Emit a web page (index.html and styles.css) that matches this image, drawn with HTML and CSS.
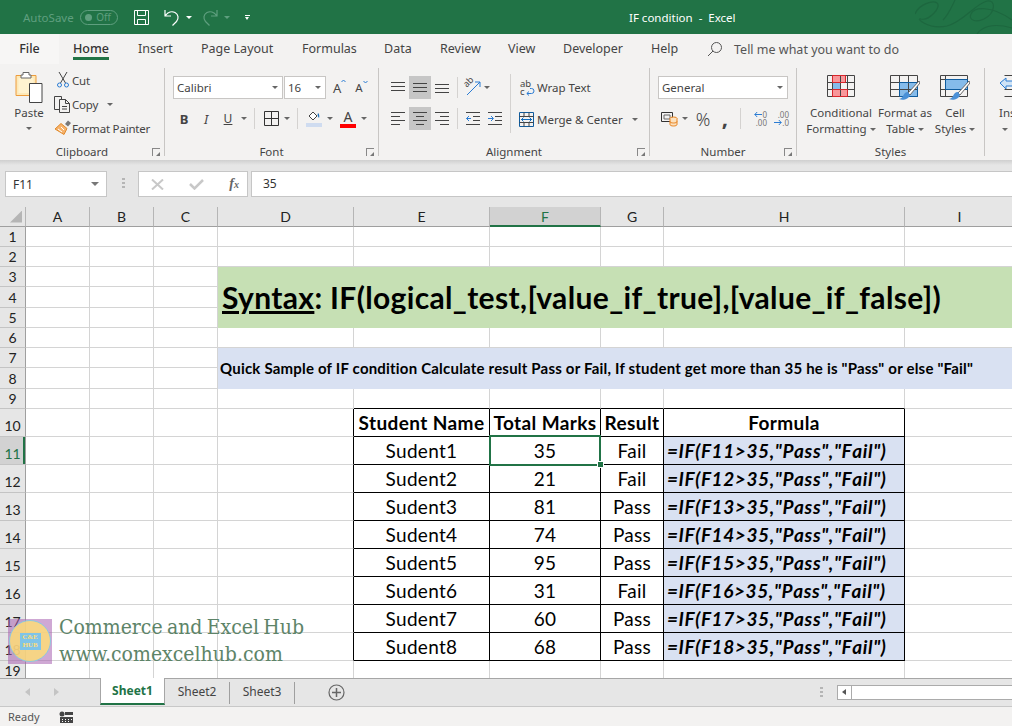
FILE: index.html
```html
<!DOCTYPE html>
<html>
<head>
    <meta charset="UTF-8">
    <title>IF condition - Excel</title>
    <link rel="stylesheet" href="styles.css">
</head>
<body>
    <!-- title bar -->
    <div class="titlebar">
        <span class="autosave">AutoSave</span>
        <span class="toggle"><i></i>Off</span>
        <svg class="qat-save" width="17" height="17" viewBox="0 0 17 17" fill="none" stroke="#fff"><path d="M1.5 1.5h14v14h-14zM4.5 1.5v5h8v-5M4.500 15.500v-5h8v5"/></svg>
        <svg class="qat-undo" width="16" height="18" viewBox="0 0 16 18" fill="none" stroke="#fff" stroke-width="1.2"><path d="M1 2v6h6M1.500 7.500C4 4 8 3 11 4.500c3.500 2 4 6 1.500 9l-4 4"/></svg>
        <span class="qat-caret"></span>
        <svg class="qat-redo" width="16" height="18" viewBox="0 0 16 18" fill="none" stroke="#5f9f7f" stroke-width="1.2"><path d="M15 2v6H9M14.500 7.500C12 4 8 3 5 4.500c-3.500 2-4 6-1.500 9l4 4"/></svg>
        <span class="qat-caret dim"></span>
        <span class="qat-more"></span>
        <span class="doc-title">IF condition &nbsp;-&nbsp; Excel</span>
        <svg class="swirl" width="97" height="34" viewBox="0 0 97 34" fill="none" stroke="#1d673f" stroke-width="1.2"><path d="M0 14C4 4 18 0 22 3c5 4-8 18-16 16C0 17 12 30 32 26 48 22 60 4 72 1c9-2 9 12-3 18-8 4-16 1-13-5 3-7 20-9 41 6M62 34c4-6 14-12 35-6M40 0c-4 8-6 14-12 20"/></svg>
    </div>

    <!-- ribbon tabs -->
    <div class="tabs">
        <span class="tab file">File</span>
        <span class="tab home">Home</span>
        <span class="tab insert">Insert</span>
        <span class="tab layout">Page Layout</span>
        <span class="tab formulas">Formulas</span>
        <span class="tab data">Data</span>
        <span class="tab review">Review</span>
        <span class="tab view">View</span>
        <span class="tab developer">Developer</span>
        <span class="tab help">Help</span>
        <svg class="search" width="16" height="16" viewBox="0 0 16 16" fill="none" stroke="#555"><circle cx="9.500" cy="6.500" r="5"/><path d="M6 10l-5 5"/></svg>
        <span class="tellme">Tell me what you want to do</span>
    </div>

    <!-- ribbon -->
    <div class="ribbon">
        <div class="group clipboard">
            <div class="group-body">
                <div class="paste">
                    <svg width="28" height="32" viewBox="0 0 28 32"><path d="M1 4.500h20v20H1z" fill="#fde9b8" stroke="#ed9c3c"/><path d="M3.500 7h15v15h-15z" fill="#fff3d0"/><path d="M8 4V1.500h6V4h2v3H6V4z" fill="#fff" stroke="#666"/><path d="M14.500 12.500h12.500v19H14.500z" fill="#fff" stroke="#444"/></svg>
                    <span>Paste</span>
                    <span class="caret"></span>
                </div>
                <div class="stack">
                    <div class="stack-row"><span class="slot">
                        <svg width="12" height="16" viewBox="0 0 12 16" fill="none" stroke="#444"><path d="M2 0l6.500 11M10 0L3.500 11"/><circle cx="2.500" cy="13" r="2" stroke="#2b7cd3"/><circle cx="9.500" cy="13" r="2" stroke="#2b7cd3"/></svg>
                    </span>Cut</div>
                    <div class="stack-row"><span class="slot">
                        <svg width="17" height="17" viewBox="0 0 17 17" fill="none" stroke="#444"><path d="M5 13.500H.5V.5h7V3"/><path d="M5.500 3.500h6l4 4v9h-10z" fill="#f3f2f1"/><path d="M11.500 3.500v4h4M8 10.500h5M8 13h5"/></svg>
                    </span>Copy<span class="caret copy-caret"></span></div>
                    <div class="stack-row"><span class="slot">
                        <svg width="18" height="16" viewBox="0 0 18 16"><path d="M11 4l3-3.500 3 2.500-3 3.500z" fill="#777"/><path d="M7 3.500l6 5-3 6-9-5.500z" fill="#f6b26b" stroke="#e08a2c"/><path d="M4 9l4 3M7 7l3 3" stroke="#fff"/></svg>
                    </span>Format Painter</div>
                </div>
            </div>
            <div class="group-label">Clipboard</div>
            <span class="launcher"></span>
        </div>

        <div class="group font">
            <div class="group-body two-rows">
                <div class="tool-row">
                    <div class="select font-name">Calibri<span class="caret"></span></div>
                    <div class="select font-size">16<span class="caret"></span></div>
                    <span class="grow-font">A<svg width="5" height="4" viewBox="0 0 5 4" fill="none" stroke="#2b7cd3"><path d="M.5 3l2-2 2 2"/></svg></span>
                    <span class="shrink-font">A<svg width="5" height="4" viewBox="0 0 5 4" fill="none" stroke="#2b7cd3"><path d="M.5 1l2 2 2-2"/></svg></span>
                </div>
                <div class="tool-row">
                    <span class="tb bold">B</span>
                    <span class="tb italic">I</span>
                    <span class="tb underline">U</span>
                    <span class="caret-slot"><span class="caret"></span></span>
                    <span class="sep"></span>
                    <span class="tb"><svg width="15" height="15" viewBox="0 0 15 15" fill="none" stroke="#333"><path d="M.5.500h14v14H.500zM7.500.500v14M.500 7.500h14"/></svg></span>
                    <span class="caret-slot"><span class="caret"></span></span>
                    <span class="sep"></span>
                    <span class="tb"><svg width="16" height="17" viewBox="0 0 16 17"><path d="M3 6l4-4 4 4-4 4z" fill="#fff" stroke="#444"/><path d="M12 3c1.500 1 1.500 4 1 5-1-1-2-3-1-5z" fill="#1f6fb5"/><path d="M0 13h16v4H0z" fill="#cfdcf0"/></svg></span>
                    <span class="caret-slot"><span class="caret"></span></span>
                    <span class="tb font-color">A</span>
                    <span class="caret-slot"><span class="caret"></span></span>
                </div>
            </div>
            <div class="group-label">Font</div>
            <span class="launcher"></span>
        </div>

        <div class="group alignment">
            <div class="group-body align-body">
                <div class="two-rows align-left">
                    <div class="tool-row">
                        <span class="tb"><svg width="14" height="11" viewBox="0 0 14 11" stroke="#444"><path d="M0 .5h14M0 4.500h14M0 8.500h14"/></svg></span>
                        <span class="tb active"><svg width="14" height="11" viewBox="0 0 14 11" stroke="#444"><path d="M0 1.500h14M0 5.500h14M0 9.500h14"/></svg></span>
                        <span class="tb"><svg width="14" height="11" viewBox="0 0 14 11" stroke="#444"><path d="M0 2.500h14M0 6.500h14M0 10.500h14"/></svg></span>
                        <span class="sep"></span>
                        <span class="tb orient"><span class="orient-ab">ab</span><svg width="18" height="17" viewBox="0 0 18 17" fill="none" stroke="#2b7cd3"><path d="M3 16L16 3M16 3v5M16 3h-5"/></svg></span>
                        <span class="caret-slot orient-caret"><span class="caret"></span></span>
                    </div>
                    <div class="tool-row">
                        <span class="tb"><svg width="14" height="13" viewBox="0 0 14 13" stroke="#444"><path d="M0 .5h14M0 4.500h9M0 8.500h14M0 12.500h9"/></svg></span>
                        <span class="tb active"><svg width="14" height="13" viewBox="0 0 14 13" stroke="#444"><path d="M0 .5h14M3 4.500h8M0 8.500h14M3 12.500h8"/></svg></span>
                        <span class="tb"><svg width="14" height="13" viewBox="0 0 14 13" stroke="#444"><path d="M0 .5h14M5 4.500h9M0 8.500h14M5 12.500h9"/></svg></span>
                        <span class="sep"></span>
                        <span class="tb"><svg width="14" height="13" viewBox="0 0 14 13" fill="none"><path d="M0 .5h14M7 4.500h7M7 8.500h7M0 12.500h14" stroke="#444"/><path d="M5 6.500H.5M3 4L.5 6.500 3 9" stroke="#2b7cd3"/></svg></span>
                        <span class="tb"><svg width="14" height="13" viewBox="0 0 14 13" fill="none"><path d="M0 .5h14M7 4.500h7M7 8.500h7M0 12.500h14" stroke="#444"/><path d="M0 6.500h5M3 4l2.500 2.500L3 9" stroke="#2b7cd3"/></svg></span>
                    </div>
                </div>
                <div class="wrap-merge">
                    <div class="wm-row"><span class="wm-icon wrap-icon">
                        <span class="wrap-line">ab</span>
                        <span class="wrap-line">c<svg width="9" height="9" viewBox="0 0 9 9" fill="none" stroke="#2b7cd3"><path d="M1 6.500h4.500a2.500 2.500 0 0 0 0-5H4M3 4.500L.8 6.500 3 8.500"/></svg></span>
                    </span>Wrap Text</div>
                    <div class="wm-row"><span class="wm-icon">
                        <svg width="15" height="15" viewBox="0 0 15 15" fill="none"><path d="M.5.500h14v14H.500z" stroke="#0f5c9e"/><path d="M5 .5v4M10 .5v4M5 10.500v4M10 10.500v4M.500 4.500h14M.500 10.500h14" stroke="#444"/><path d="M2 7.500h11M4.500 5.500L2.500 7.500l2 2M10.500 5.500l2 2-2 2" stroke="#0f6cbd"/></svg>
                    </span>Merge &amp; Center<span class="caret merge-caret"></span></div>
                </div>
            </div>
            <div class="group-label">Alignment</div>
            <span class="launcher"></span>
        </div>

        <div class="group number">
            <div class="group-body two-rows">
                <div class="tool-row">
                    <div class="select number-format">General<span class="caret"></span></div>
                </div>
                <div class="tool-row">
                    <span class="tb"><svg width="17" height="16" viewBox="0 0 17 16" fill="none"><path d="M.5 1.500h11v9H.500z" stroke="#333"/><path d="M3 4h6v4H3z" stroke="#666"/><ellipse cx="12.500" cy="7.500" rx="3.500" ry="1.500" fill="#fbe1bf" stroke="#e8821e"/><path d="M9 7.500v6c0 2 7 2 7 0v-6M9 10.500c0 2 7 2 7 0" fill="#fbe1bf" stroke="#e8821e"/></svg></span>
                    <span class="caret-slot"><span class="caret"></span></span>
                    <span class="tb percent">%</span>
                    <span class="tb comma"><span>,</span></span>
                    <span class="sep"></span>
                    <span class="tb dec">
                        <span class="dec-line"><svg width="8" height="7" viewBox="0 0 8 7" fill="none" stroke="#2b7cd3"><path d="M8 3.500H.8M3.200 1L.8 3.500 3.200 6"/></svg>0</span>
                        <span class="dec-line">.00</span>
                    </span>
                    <span class="tb dec">
                        <span class="dec-line">.00</span>
                        <span class="dec-line"><svg width="8" height="7" viewBox="0 0 8 7" fill="none" stroke="#2b7cd3"><path d="M0 3.500h7.200M4.800 1l2.400 2.500L4.800 6"/></svg>.0</span>
                    </span>
                </div>
            </div>
            <div class="group-label">Number</div>
            <span class="launcher"></span>
        </div>

        <div class="group styles">
            <div class="group-body">
                <div class="big-btn cond">
                    <svg width="28" height="28" viewBox="0 0 28 28" fill="none"><path d="M5.500 .5h13v7h-13zM5.500 14.500h15v7h-15z" fill="#f8979a"/><path d="M5.500 7.500h8v7h-8z" fill="#85bbea" stroke="#0f5c9e"/><path d="M.5.500h27v21H.500zM.500 7.500h27M.500 14.500h27M5.500.500v21M13.500.500v21M20.500.500v21" stroke="#444"/><path d="M5.500 .5h13v7h-13zM5.500 14.500h15v7h-15z" stroke="#d9262b"/></svg>
                    <span>Conditional</span>
                    <span>Formatting<i class="caret"></i></span>
                </div>
                <div class="big-btn astable">
                    <svg width="30" height="28" viewBox="0 0 30 28" fill="none"><path d="M9.500 7.500h18v14h-18z" fill="#85bbea"/><path d="M.5.500h27v21H.500zM.500 7.500h27M.500 14.500h27M9.500.500v21M18.500.500v21" stroke="#444"/><path d="M9.500 7.500h18v14h-18z" stroke="#0f5c9e"/><path d="M29 6L18 18l2 2L30 8z" fill="#fff" stroke="#666"/><path d="M18 17c-3 0-4 2-5 4s-3 3-4 3c4 2 10 0 11-4z" fill="#4a90d6"/></svg>
                    <span>Format as</span>
                    <span>Table<i class="caret"></i></span>
                </div>
                <div class="big-btn cellstyles">
                    <svg width="30" height="28" viewBox="0 0 30 28" fill="none"><path d="M5.500 4.500h22v10h-22z" fill="#85bbea"/><path d="M.5.500h27v21H.500z" stroke="#444"/><path d="M.500 4.500h27M.500 14.500h27M5.500.500v21" stroke="#444"/><path d="M5.500 4.500h22v10h-22z" stroke="#0f5c9e"/><path d="M29 6L18 18l2 2L30 8z" fill="#fff" stroke="#666"/><path d="M18 17c-3 0-4 2-5 4s-3 3-4 3c4 2 10 0 11-4z" fill="#4a90d6"/></svg>
                    <span>Cell</span>
                    <span>Styles<i class="caret"></i></span>
                </div>
            </div>
            <div class="group-label">Styles</div>
        </div>

        <div class="group cells">
            <div class="group-body">
                <div class="big-btn insert-btn">
                    <svg width="27" height="28" viewBox="0 0 27 28" fill="none"><path d="M5.500 .5h21v21h-21M5.500 7.500h21M5.500 14.500h21" stroke="#444"/><path d="M1 8l6-5v3h8v5H7v3z" fill="#cfe3f6" stroke="#2b7cd3"/></svg>
                    <span>Insert</span>
                    <span><i class="caret"></i></span>
                </div>
            </div>
        </div>
    </div>
    <div class="ribbon-shadow"></div>

    <!-- formula bar -->
    <div class="formula-bar">
        <div class="name-box">F11<span class="caret"></span></div>
        <span class="grip"></span>
        <div class="fx-box">
            <svg width="13" height="11" viewBox="0 0 13 11" stroke="#c8c8c8" stroke-width="2"><path d="M1 .5l11 10M12 .5L1 10.500"/></svg>
            <svg width="15" height="11" viewBox="0 0 15 11" fill="none" stroke="#c8c8c8" stroke-width="2.500"><path d="M1 5l4.500 4.500L14 1"/></svg>
            <span class="fx">f<small>x</small></span>
        </div>
        <div class="formula-input">35</div>
    </div>

    <!-- sheet -->
    <div class="sheet">
        <table class="grid">
            <colgroup>
                <col class="c-head"><col class="c-abc"><col class="c-abc"><col class="c-abc"><col class="c-d"><col class="c-e"><col class="c-f"><col class="c-g"><col class="c-h"><col class="c-i">
            </colgroup>
            <tr class="col-heads">
                <th class="corner"><span></span></th><th>A</th><th>B</th><th>C</th><th>D</th><th>E</th><th class="on">F</th><th>G</th><th>H</th><th>I</th>
            </tr>
            <tr class="r20"><th>1</th><td></td><td></td><td></td><td></td><td></td><td></td><td></td><td></td><td></td></tr>
            <tr class="r20"><th>2</th><td></td><td></td><td></td><td></td><td></td><td></td><td></td><td></td><td></td></tr>
            <tr class="r20"><th>3</th><td></td><td></td><td></td><td class="syntax" colspan="6" rowspan="3"><u>Syntax</u>: IF(logical_test,[value_if_true],[value_if_false])</td></tr>
            <tr class="r21"><th>4</th><td></td><td></td><td></td></tr>
            <tr class="r20"><th>5</th><td></td><td></td><td></td></tr>
            <tr class="r20"><th>6</th><td></td><td></td><td></td><td></td><td></td><td></td><td></td><td></td><td></td></tr>
            <tr class="r20"><th>7</th><td></td><td></td><td></td><td class="sample" colspan="6" rowspan="2">Quick Sample of IF condition Calculate result Pass or Fail, If student get more than 35 he is "Pass" or else "Fail"</td></tr>
            <tr class="r21"><th>8</th><td></td><td></td><td></td></tr>
            <tr class="r20 above"><th>9</th><td></td><td></td><td></td><td></td><td class="k"></td><td class="k"></td><td class="k"></td><td class="k"></td><td></td></tr>
            <tr class="r28"><th>10</th><td></td><td></td><td></td><td class="kr"></td><td class="hd">Student Name</td><td class="hd">Total Marks</td><td class="hd">Result</td><td class="hd">Formula</td><td></td></tr>
            <tr class="r28"><th class="on">11</th><td></td><td></td><td></td><td class="kr"></td><td class="val">Sudent1</td><td class="val selected">35</td><td class="val">Fail</td><td class="fm">=IF(F11&gt;35,"Pass","Fail")</td><td></td></tr>
            <tr class="r28"><th>12</th><td></td><td></td><td></td><td class="kr"></td><td class="val">Sudent2</td><td class="val">21</td><td class="val">Fail</td><td class="fm">=IF(F12&gt;35,"Pass","Fail")</td><td></td></tr>
            <tr class="r28"><th>13</th><td></td><td></td><td></td><td class="kr"></td><td class="val">Sudent3</td><td class="val">81</td><td class="val">Pass</td><td class="fm">=IF(F13&gt;35,"Pass","Fail")</td><td></td></tr>
            <tr class="r28"><th>14</th><td></td><td></td><td></td><td class="kr"></td><td class="val">Sudent4</td><td class="val">74</td><td class="val">Pass</td><td class="fm">=IF(F14&gt;35,"Pass","Fail")</td><td></td></tr>
            <tr class="r28"><th>15</th><td></td><td></td><td></td><td class="kr"></td><td class="val">Sudent5</td><td class="val">95</td><td class="val">Pass</td><td class="fm">=IF(F15&gt;35,"Pass","Fail")</td><td></td></tr>
            <tr class="r28"><th>16</th><td></td><td></td><td></td><td class="kr"></td><td class="val">Sudent6</td><td class="val">31</td><td class="val">Fail</td><td class="fm">=IF(F16&gt;35,"Pass","Fail")</td><td></td></tr>
            <tr class="r28"><th>17</th><td></td><td></td><td></td><td class="kr"></td><td class="val">Sudent7</td><td class="val">60</td><td class="val">Pass</td><td class="fm">=IF(F17&gt;35,"Pass","Fail")</td><td></td></tr>
            <tr class="r28"><th>18</th><td></td><td></td><td></td><td class="kr"></td><td class="val">Sudent8</td><td class="val">68</td><td class="val">Pass</td><td class="fm">=IF(F18&gt;35,"Pass","Fail")</td><td></td></tr>
            <tr class="r20"><th>19</th><td></td><td></td><td></td><td></td><td></td><td></td><td></td><td></td><td></td></tr>
        </table>

        <!-- watermark over the sheet -->
        <div class="watermark">
            <div class="wm-logo"><div class="wm-circle"><div class="wm-badge">C&amp;E<br>HUB</div></div></div>
            <div class="wm-text">Commerce and Excel Hub<br>www.comexcelhub.com</div>
        </div>
    </div>

    <!-- sheet tabs -->
    <div class="sheet-tabs">
        <span class="nav-arrow left"></span>
        <span class="nav-arrow right"></span>
        <span class="sheet-tab current">Sheet1</span>
        <span class="sheet-tab">Sheet2</span>
        <span class="sheet-tab">Sheet3</span>
        <svg class="add-sheet" width="17" height="17" viewBox="0 0 17 17" fill="none" stroke="#666"><circle cx="8.500" cy="8.500" r="7.500" stroke-width="1.200"/><path d="M8.500 4v9M4 8.500h9" stroke-width="1.500"/></svg>
        <span class="grip tabs-grip"></span>
        <div class="hscroll"><span class="hscroll-btn"></span></div>
    </div>

    <!-- status bar -->
    <div class="statusbar">
        <span>Ready</span>
        <svg width="14" height="12" viewBox="0 0 14 12"><circle cx="3" cy="3" r="2.500" fill="#444"/><path d="M6 1h8v3H6zM1 6h13v6H1z" fill="#444"/><path d="M3 8h1v1H3zM6 8h1v1H6zM9 8h1v1H9zM12 8h1v1h-1zM3 10h1v1H3zM6 10h1v1H6zM9 10h1v1H9z" fill="#fff"/></svg>
    </div>
</body>
</html>
```

FILE: styles.css
```css
* {
    box-sizing: border-box;
}
html, body {
    margin: 0;
    height: 100%;
}
body {
    font-family: 'Noto Sans', 'Open Sans', sans-serif;
    font-size: 11.5px;
    color: #444;
    background: #e6e6e6;
    display: flex;
    flex-direction: column;
    height: 726px;
    overflow: hidden;
}

/* title bar */
.titlebar {
    flex: none;
    height: 34px;
    background: #217346;
    display: flex;
    align-items: center;
    padding-left: 23px;
    color: #fff;
    overflow: hidden;
}
.autosave {
    width: 57px;
    font-size: 11.5px;
    color: #5f9f7f;
}
.toggle {
    width: 38px;
    height: 15px;
    border: 1px solid #5f9f7f;
    border-radius: 8px;
    color: #5f9f7f;
    font-size: 10px;
    line-height: 13px;
    display: flex;
    justify-content: flex-end;
    padding-right: 6px;
    position: relative;
}
.toggle i {
    position: absolute;
    left: 4px;
    top: 3px;
    width: 7px;
    height: 7px;
    border-radius: 50%;
    background: #5f9f7f;
}
.qat-save {
    margin-left: 15px;
}
.qat-undo {
    margin-left: 14px;
}
.qat-caret {
    width: 0;
    height: 0;
    margin-left: 6px;
    border: 3px solid transparent;
    border-top: 3px solid #fff;
    border-bottom: 0;
}
.qat-caret.dim {
    border-top-color: #5f9f7f;
}
.qat-redo {
    margin-left: 10px;
}
.qat-more {
    margin-left: 15px;
    width: 5px;
    height: 5px;
    border-top: 1px solid #fff;
    position: relative;
}
.qat-more::after {
    content: "";
    position: absolute;
    left: 0;
    top: 1px;
    border: 2.5px solid transparent;
    border-top: 3px solid #fff;
    border-bottom: 0;
}
.doc-title {
    margin-left: 379px;
    font-size: 11.5px;
    white-space: nowrap;
}
.swirl {
    margin-left: auto;
}

/* tabs */
.tabs {
    flex: none;
    height: 30px;
    background: #f3f2f1;
    display: flex;
    align-items: center;
    font-size: 12.5px;
    position: relative;
}
.tab {
    position: absolute;
    top: 6px;
    white-space: nowrap;
}
.tab.file { left: 0; top: 0; width: 59px; height: 30px; line-height: 30px; text-align: center; background: #f7f6f5; font-weight: 500; color: #333; }
.tab.home { left: 73px; color: #333; font-weight: 500; }
.tab.home::after {
    content: "";
    display: block;
    height: 3px;
    background: #217346;
}
.tab.insert { left: 138px; }
.tab.layout { left: 201px; }
.tab.formulas { left: 302px; }
.tab.data { left: 384px; }
.tab.review { left: 440px; }
.tab.view { left: 508px; }
.tab.developer { left: 563px; }
.tab.help { left: 651px; }
.search {
    margin-left: 707px;
}
.tellme {
    margin-left: 11px;
    color: #555;
}

/* ribbon */
.ribbon {
    flex: none;
    height: 96px;
    background: #f3f2f1;
    display: flex;
    padding: 4px 0;
    overflow: hidden;
}
.ribbon-shadow {
    flex: none;
    height: 5px;
    background: linear-gradient(#cfcfcf, #e6e6e6);
}
.group {
    flex: none;
    height: 88px;
    display: flex;
    flex-direction: column;
    border-right: 1px solid #c8c6c4;
    position: relative;
}
.group.clipboard { width: 165px; }
.group.font { width: 214px; }
.group.alignment { width: 271px; }
.group.number { width: 147px; }
.group.styles { width: 188px; }
.group.cells { width: 60px; border-right: 0; }
.group-body {
    flex: 1;
    display: flex;
    min-height: 0;
}
.group-label {
    height: 16px;
    line-height: 23px;
    text-align: center;
    white-space: nowrap;
}
.launcher {
    position: absolute;
    right: 4px;
    bottom: 0;
    width: 8px;
    height: 8px;
    border-left: 1px solid #888;
    border-top: 1px solid #888;
}
.launcher::after {
    content: "";
    position: absolute;
    right: 0;
    bottom: 0;
    border-left: 4px solid transparent;
    border-bottom: 4px solid #777;
}
.caret {
    display: inline-block;
    width: 0;
    height: 0;
    border: 3px solid transparent;
    border-top: 3px solid #666;
    border-bottom: 0;
    vertical-align: middle;
}

/* clipboard */
.paste {
    width: 46px;
    margin-left: 6px;
    padding-top: 3px;
    display: flex;
    flex-direction: column;
    align-items: center;
}
.paste span:not(.caret) {
    height: 16px;
    line-height: 16px;
    margin-top: 2px;
}
.paste .caret {
    margin-top: 6px;
}
.stack {
    margin-left: 1px;
}
.stack-row {
    height: 24px;
    display: flex;
    align-items: center;
    white-space: nowrap;
    letter-spacing: -0.2px;
}
.slot {
    width: 19px;
    display: flex;
    justify-content: center;
}
.copy-caret {
    margin-left: 9px;
}

/* font */
.two-rows {
    flex-direction: column;
    display: flex;
    gap: 8px;
    padding: 8px 0 0 8px;
}
.tool-row {
    display: flex;
    align-items: center;
    height: 23px;
}
.select {
    height: 23px;
    background: #fff;
    border: 1px solid #c8c6c4;
    display: flex;
    align-items: center;
    justify-content: space-between;
    padding: 0 4px 0 3px;
    font-size: 11.5px;
}
.font-name { width: 110px; margin-right: 1px; }
.font-size { width: 42px; }
.number-format { width: 130px; }
.grow-font, .shrink-font {
    display: flex;
    align-items: flex-start;
    font-size: 13px;
}
.grow-font { margin-left: 7px; }
.shrink-font { margin-left: 9px; font-size: 11.5px; }
.tb {
    flex: none;
    width: 22px;
    height: 23px;
    display: flex;
    align-items: center;
    justify-content: center;
}
.tb.active {
    background: #c6c6c6;
}
.caret-slot {
    flex: none;
    width: 10px;
    display: flex;
    justify-content: center;
}
.sep {
    flex: none;
    width: 1px;
    height: 21px;
    margin: 0 5px;
    background: #d4d2d0;
}
.bold { font-weight: 700; font-size: 13px; }
.italic { font-style: italic; font-size: 13px; }
.underline { text-decoration: underline; font-size: 12px; }
.font-color {
    margin-left: 2px;
    flex-direction: column;
    font-size: 14px;
    line-height: 14px;
}
.font-color::after {
    content: "";
    width: 16px;
    height: 4px;
    background: #f00;
}

/* alignment */
.align-left {
    width: 131px;
}
.align-left .sep {
    margin: 0 4px;
}
.orient {
    position: relative;
}
.orient-ab {
    position: absolute;
    left: 1px;
    top: 1px;
    font-size: 9px;
    line-height: 10px;
    transform: rotate(-45deg);
}
.orient-caret {
    margin-left: -2px;
}
.wrap-merge {
    margin-top: 6px;
    height: 59px;
    padding-top: 2px;
    border-left: 1px solid #d4d2d0;
    display: flex;
    flex-direction: column;
    gap: 9px;
}
.wm-row {
    display: flex;
    align-items: center;
    height: 23px;
    white-space: nowrap;
}
.wm-icon {
    width: 26px;
    display: flex;
    justify-content: flex-end;
    padding-right: 3px;
}
.wrap-icon {
    flex-direction: column;
    padding-left: 9px;
    padding-right: 0;
}
.wrap-line {
    display: flex;
    align-items: center;
    gap: 1px;
    height: 8px;
    font-size: 9.5px;
    line-height: 8px;
    letter-spacing: 0;
}
.merge-caret {
    margin-left: 9px;
}

/* number */
.percent {
    margin-left: 2px;
    font-size: 18px;
    font-weight: 300;
}
.comma {
    font-size: 22px;
    font-weight: 700;
}
.comma span {
    line-height: 10px;
    height: 14px;
}
.dec {
    flex-direction: column;
    align-items: flex-end;
}
.dec-line {
    display: flex;
    align-items: center;
    height: 8px;
    font-size: 8px;
    line-height: 8px;
    color: #777;
}
.number .sep {
    margin: 0 4px;
}

/* styles */
.big-btn {
    flex: none;
    display: flex;
    flex-direction: column;
    align-items: center;
    padding-top: 7px;
    white-space: nowrap;
}
.big-btn svg {
    margin-bottom: 2px;
    flex: none;
}
.big-btn span {
    height: 16px;
    line-height: 16px;
}
.big-btn .caret {
    margin-left: 3px;
}
.cond { width: 68px; margin-left: 10px; }
.astable { width: 60px; }
.cellstyles { width: 40px; }
.insert-btn { width: 50px; margin-left: 14px; align-items: flex-start; }

/* formula bar */
.formula-bar {
    flex: none;
    height: 42px;
    display: flex;
    padding: 6px 0 10px 5px;
}
.name-box {
    width: 102px;
    background: #fff;
    border: 1px solid #c6c6c6;
    display: flex;
    align-items: center;
    justify-content: space-between;
    padding: 0 7px;
    font-size: 12px;
    color: #333;
}
.name-box .caret {
    border-width: 4px;
    border-top-width: 4px;
    border-bottom-width: 0;
    border-top-color: #777;
}
.grip {
    width: 3px;
    margin: 7px 13px 7px 15px;
    background: repeating-linear-gradient(#b5b5b5 0 2px, transparent 2px 4px);
}
.fx-box {
    width: 110px;
    background: #fff;
    border: 1px solid #c6c6c6;
    display: flex;
    align-items: center;
    padding: 0 8px 0 12px;
    justify-content: space-between;
}
.fx {
    font-family: 'Liberation Serif', serif;
    font-style: italic;
    font-weight: 700;
    font-size: 14px;
    color: #666;
}
.fx small {
    font-size: 10px;
}
.formula-input {
    flex: 1;
    margin-left: 3px;
    background: #fff;
    border: 1px solid #c6c6c6;
    border-right: 0;
    padding-left: 11px;
    line-height: 24px;
    font-size: 12px;
    color: #333;
}

/* sheet */
.sheet {
    flex: none;
    height: 471px;
    position: relative;
    overflow: hidden;
    background: #fff;
}
.grid {
    table-layout: fixed;
    width: 1015px;
    border-collapse: separate;
    border-spacing: 0;
    font-family: Lato, 'Liberation Sans', sans-serif;
    color: #000;
}
.c-head { width: 26px; }
.c-abc { width: 64px; }
.c-d { width: 136px; }
.c-e { width: 136px; }
.c-f { width: 111px; }
.c-g { width: 63px; }
.c-h { width: 241px; }
.c-i { width: 110px; }
.grid td, .grid th {
    padding: 0;
    white-space: nowrap;
    overflow: hidden;
}
.grid td {
    border-right: 1px solid #d4d4d4;
    border-bottom: 1px solid #d4d4d4;
}
.grid th {
    background: #e6e6e6;
    font-weight: 400;
    font-size: 14px;
    color: #222;
    border-right: 1px solid #9f9f9f;
    border-bottom: 1px solid #c4c4c4;
}
.grid .col-heads th {
    height: 20px;
    border-right: 1px solid #b5b5b5;
    border-bottom: 1px solid #9f9f9f;
}
.grid .col-heads th.on {
    background: #d2d2d2;
    color: #217346;
    border-bottom: 2px solid #217346;
}
.grid th.on {
    background: #d2d2d2;
    color: #217346;
    box-shadow: inset -2px 0 #217346;
}
.grid .col-heads th.on {
    box-shadow: none;
}
.corner span {
    display: block;
    width: 12px;
    height: 12px;
    margin: 0 0 0 10px;
    background: #b5b5b5;
    clip-path: polygon(100% 0, 100% 100%, 0 100%);
}
.r20 > * { height: 20px; }
.r21 > * { height: 21px; }
.r28 > * { height: 28px; }
.r28 > th { vertical-align: bottom; padding-bottom: 2px; }

.grid td.syntax {
    background: #c6e0b4;
    border-color: #c6e0b4;
    font-size: 30px;
    font-weight: 700;
    letter-spacing: 0.35px;
    padding-left: 4px;
}
.grid td.sample {
    background: #d9e1f2;
    border-color: #d9e1f2;
    font-size: 15px;
    font-weight: 700;
    letter-spacing: 0.2px;
    padding-left: 2px;
}
.grid td.k { border-bottom-color: #000; }
.grid td.kr { border-right-color: #000; }
.grid td.hd, .grid td.val, .grid td.fm {
    border-right-color: #000;
    border-bottom-color: #000;
}
.grid td.hd {
    font-size: 19px;
    font-weight: 700;
    letter-spacing: 0.4px;
    text-align: center;
}
.grid td.val {
    font-size: 19px;
    letter-spacing: 0.3px;
    text-align: center;
}
.grid td.fm {
    background: #d9e1f2;
    font-size: 19px;
    font-weight: 700;
    font-style: italic;
    font-kerning: none;
    letter-spacing: 0.6px;
    padding-left: 3px;
}
.grid td.selected {
    position: relative;
    overflow: visible;
}
.grid td.selected::before {
    content: "";
    position: absolute;
    left: -1px;
    top: -2px;
    right: -1px;
    bottom: -2px;
    border: 2px solid #217346;
}
.grid td.selected::after {
    content: "";
    position: absolute;
    right: -3px;
    bottom: -3px;
    width: 5px;
    height: 5px;
    background: #217346;
    outline: 1px solid #fff;
}

/* watermark */
.watermark {
    position: absolute;
    left: 8px;
    top: 407px;
    display: flex;
    align-items: center;
}
.wm-logo {
    width: 44px;
    height: 45px;
    background: rgba(168, 96, 176, 0.55);
    display: flex;
    align-items: center;
    justify-content: center;
}
.wm-circle {
    width: 42px;
    height: 42px;
    border-radius: 50%;
    background: rgba(253, 220, 120, 0.85);
    border: 1px solid #8cc8e0;
    display: flex;
    align-items: center;
    justify-content: center;
}
.wm-badge {
    width: 21px;
    height: 17px;
    background: #7fc4e8;
    color: #fddc78;
    font: 700 7px/8px 'Liberation Serif', serif;
    text-align: center;
}
.wm-text {
    margin-left: 7px;
    font-family: 'DejaVu Serif Condensed', 'DejaVu Serif', serif;
    font-stretch: condensed;
    font-size: 21px;
    line-height: 27px;
    word-spacing: -1.7px;
    color: #5d8468;
    white-space: nowrap;
}

/* sheet tabs */
.sheet-tabs {
    flex: none;
    height: 29px;
    background: #e6e6e6;
    border-top: 1px solid #a6a6a6;
    border-bottom: 1px solid #c8c8c8;
    display: flex;
    align-items: flex-start;
}
.nav-arrow {
    width: 0;
    height: 0;
    margin-top: 9px;
    border: 4px solid transparent;
}
.nav-arrow.left {
    margin-left: 25px;
    border-left: 0;
    border-right: 5px solid #c4c4c4;
}
.nav-arrow.right {
    margin-left: 24px;
    border-right: 0;
    border-left: 5px solid #c4c4c4;
}
.sheet-tab {
    height: 22px;
    margin-top: 3px;
    width: 65px;
    text-align: center;
    line-height: 20px;
    font-size: 12px;
    border-right: 1px solid #9f9f9f;
}
.sheet-tab.current {
    margin-left: 41px;
    margin-top: -1px;
    height: 27px;
    line-height: 26px;
    background: #fff;
    border: 1px solid #a6a6a6;
    border-top: 0;
    border-bottom: 2px solid #217346;
    color: #217346;
    font-weight: 700;
}
.add-sheet {
    margin: 5px 0 0 33px;
}
.tabs-grip {
    height: 12px;
    margin: 8px 0 0 475px;
}
.hscroll {
    flex: 1;
    height: 15px;
    margin: 6px 0 0 14px;
    background: #fff;
    border: 1px solid #ababab;
    border-right: 0;
}
.hscroll-btn {
    display: block;
    width: 14px;
    height: 13px;
    border-right: 1px solid #ababab;
    position: relative;
}
.hscroll-btn::after {
    content: "";
    position: absolute;
    left: 4px;
    top: 3px;
    border: 3.5px solid transparent;
    border-right: 4px solid #555;
    border-left: 0;
}

/* status bar */
.statusbar {
    flex: 1;
    background: #f3f2f1;
    display: flex;
    align-items: center;
    padding-left: 8px;
    gap: 19px;
    font-size: 11px;
    color: #555;
}
```
